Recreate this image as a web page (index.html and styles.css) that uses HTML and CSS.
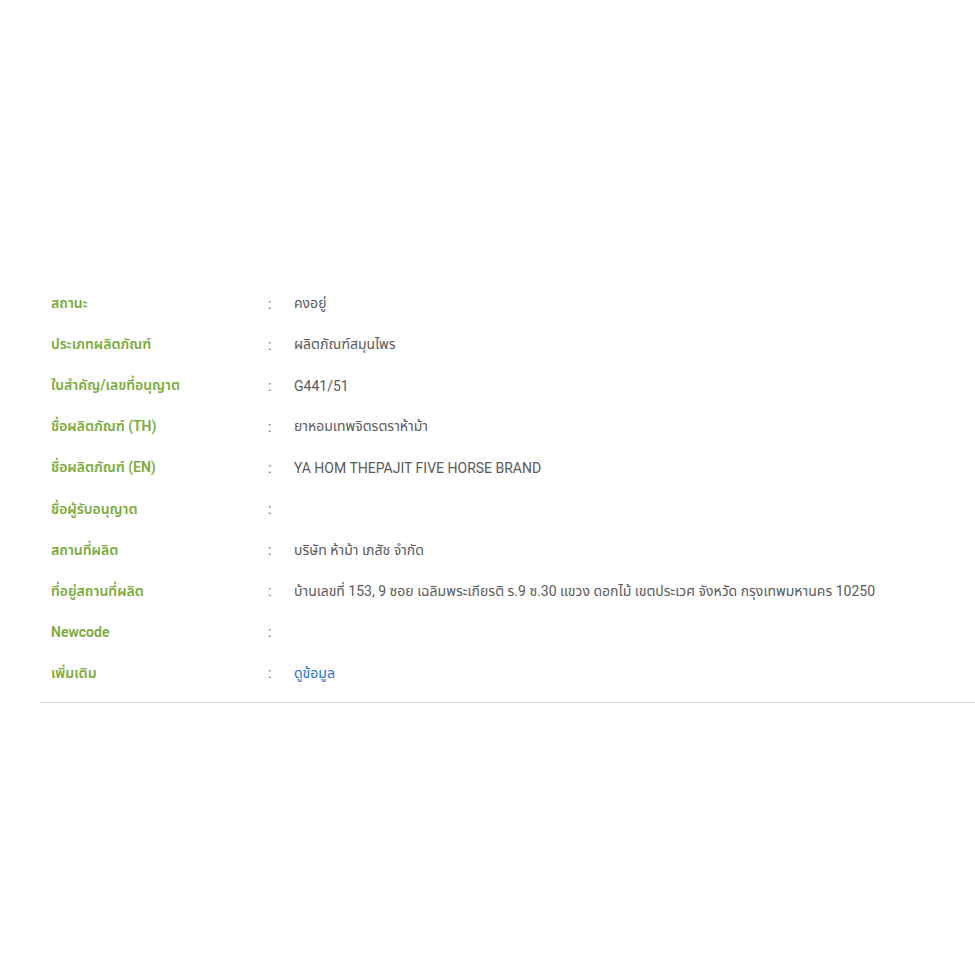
FILE: index.html
```html
<!DOCTYPE html>
<html lang="th">
<head>
    <meta charset="UTF-8">
    <meta name="viewport" content="width=device-width, initial-scale=1.0">
    <title>ข้อมูลผลิตภัณฑ์</title>
    <link rel="stylesheet" href="styles.css">
</head>
<body>
    <div class="detail">
        <div class="row">
            <div class="label">สถานะ</div>
            <div class="sep">:</div>
            <div class="value">คงอยู่</div>
        </div>
        <div class="row">
            <div class="label">ประเภทผลิตภัณฑ์</div>
            <div class="sep">:</div>
            <div class="value">ผลิตภัณฑ์สมุนไพร</div>
        </div>
        <div class="row">
            <div class="label">ใบสำคัญ/เลขที่อนุญาต</div>
            <div class="sep">:</div>
            <div class="value">G441/51</div>
        </div>
        <div class="row">
            <div class="label">ชื่อผลิตภัณฑ์ (TH)</div>
            <div class="sep">:</div>
            <div class="value">ยาหอมเทพจิตรตราห้าม้า</div>
        </div>
        <div class="row">
            <div class="label">ชื่อผลิตภัณฑ์ (EN)</div>
            <div class="sep">:</div>
            <div class="value">YA HOM THEPAJIT FIVE HORSE BRAND</div>
        </div>
        <div class="row">
            <div class="label">ชื่อผู้รับอนุญาต</div>
            <div class="sep">:</div>
            <div class="value"></div>
        </div>
        <div class="row">
            <div class="label">สถานที่ผลิต</div>
            <div class="sep">:</div>
            <div class="value">บริษัท ห้าม้า เภสัช จำกัด</div>
        </div>
        <div class="row">
            <div class="label">ที่อยู่สถานที่ผลิต</div>
            <div class="sep">:</div>
            <div class="value">บ้านเลขที่ 153, 9 ซอย เฉลิมพระเกียรติ ร.9 ซ.30 แขวง ดอกไม้ เขตประเวศ จังหวัด กรุงเทพมหานคร 10250</div>
        </div>
        <div class="row">
            <div class="label">Newcode</div>
            <div class="sep">:</div>
            <div class="value"></div>
        </div>
        <div class="row">
            <div class="label">เพิ่มเติม</div>
            <div class="sep">:</div>
            <div class="value"><a href="#">ดูข้อมูล</a></div>
        </div>
    </div>
</body>
</html>
```

FILE: styles.css
```css
body {
    font-family: Roboto, "Noto Sans Thai", "Noto Sans", sans-serif;
    background-color: #fff;
    margin: 0;
    padding: 283px 0 0 40px;
    color: #555;
    font-size: 14px;
}
.detail {
    padding: 0 0 8px 11px;
    border-bottom: 1px solid #dcdcdc;
}
.row {
    display: grid;
    grid-template-columns: 217px 26px 1fr;
    align-items: center;
    height: 41.1px;
}
.label {
    color: #7aab3b;
    font-weight: 600;
}
.sep {
    color: #666;
}
.value {
    color: #5a5a5a;
}
.value a {
    color: #1d6fe0;
    text-decoration: none;
}
```
